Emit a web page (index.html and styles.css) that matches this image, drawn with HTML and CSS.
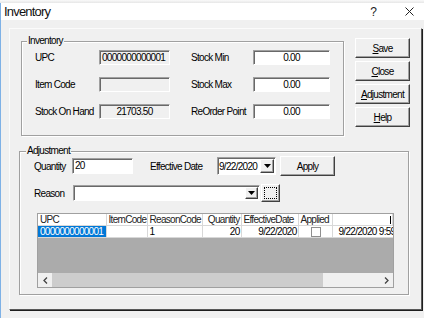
FILE: index.html
```html
<!DOCTYPE html>
<html lang="en">
<head>
  <meta charset="UTF-8">
  <meta name="viewport" content="width=device-width, initial-scale=1.0">
  <title>Inventory</title>
  <link rel="stylesheet" href="styles.css">
</head>
<body>
  <div class="screen-top"></div>
  <div class="window">
    <div class="titlebar">
      <span class="title">Inventory</span>
      <span class="tb-help">?</span>
      <span class="tb-close">
        <svg width="9" height="9" viewBox="0 0 9 9"><path d="M0.5 0.5 L8.5 8.5 M8.5 0.5 L0.5 8.5" stroke="#222" stroke-width="1" fill="none"/></svg>
      </span>
    </div>

    <div class="client">
      <div class="panel">
        <div class="top-row">
          <fieldset class="group inventory">
            <legend>Inventory</legend>
            <div class="inv-grid">
              <label>UPC</label>
              <div class="field readonly">0000000000001</div>
              <label class="col2">Stock Min</label>
              <div class="field center">0.00</div>

              <label>Item Code</label>
              <div class="field readonly"></div>
              <label class="col2">Stock Max</label>
              <div class="field center">0.00</div>

              <label>Stock On Hand</label>
              <div class="field readonly center">21703.50</div>
              <label class="col2">ReOrder Point</label>
              <div class="field center">0.00</div>
            </div>
          </fieldset>

          <div class="actions">
            <button class="btn"><u>S</u>ave</button>
            <button class="btn"><u>C</u>lose</button>
            <button class="btn"><u>A</u>djustment</button>
            <button class="btn"><u>H</u>elp</button>
          </div>
        </div>

        <fieldset class="group adjustment">
          <legend>Adjustment</legend>

          <div class="adj-row first">
            <label class="lbl-qty">Quantity</label>
            <div class="field qty">20</div>
            <label class="lbl-date">Effective Date</label>
            <div class="field combo date">
              <span class="combo-text">9/22/2020</span>
              <span class="drop-btn"><svg width="7" height="4" viewBox="0 0 7 4"><path d="M0 0 H7 L3.5 4 Z" fill="#000"/></svg></span>
            </div>
            <button class="btn apply">Apply</button>
          </div>

          <div class="adj-row second">
            <label class="lbl-reason">Reason</label>
            <div class="field combo reason">
              <span class="combo-text"></span>
              <span class="drop-btn"><svg width="7" height="4" viewBox="0 0 7 4"><path d="M0 0 H7 L3.5 4 Z" fill="#000"/></svg></span>
            </div>
            <button class="btn pick"><span class="focus-rect"></span></button>
          </div>

          <div class="datagrid">
            <table>
              <colgroup>
                <col style="width: 68px">
                <col style="width: 41px">
                <col style="width: 55px">
                <col style="width: 39px">
                <col style="width: 57px">
                <col style="width: 34px">
                <col>
              </colgroup>
              <thead>
                <tr>
                  <th>UPC</th>
                  <th>ItemCode</th>
                  <th>ReasonCode</th>
                  <th class="right">Quantity</th>
                  <th>EffectiveDate</th>
                  <th>Applied</th>
                  <th class="right"><span class="tick"></span></th>
                </tr>
              </thead>
              <tbody>
                <tr>
                  <td class="selected">0000000000001</td>
                  <td></td>
                  <td>1</td>
                  <td class="right">20</td>
                  <td class="right">9/22/2020</td>
                  <td class="center"><span class="checkbox"></span></td>
                  <td class="clip">9/22/2020 9:59</td>
                </tr>
              </tbody>
            </table>
            <div class="grid-empty"></div>
            <div class="hscroll">
              <span class="arrow">
                <svg width="5" height="7" viewBox="0 0 5 7"><path d="M4 0.5 L1 3.5 L4 6.5" stroke="#444" stroke-width="1.3" fill="none"/></svg>
              </span>
              <span class="thumb"></span>
              <span class="track"></span>
              <span class="arrow">
                <svg width="5" height="7" viewBox="0 0 5 7"><path d="M1 0.5 L4 3.5 L1 6.5" stroke="#444" stroke-width="1.3" fill="none"/></svg>
              </span>
            </div>
          </div>
        </fieldset>
      </div>
    </div>
  </div>
</body>
</html>
```

FILE: styles.css
```css
body {
  margin: 0;
  width: 424px;
  height: 318px;
  overflow: hidden;
  background: #f0f0f0;
  font-family: "Liberation Sans", Arial, sans-serif;
  font-size: 10px;
  letter-spacing: -0.7px;
  color: #000;
}

label {
  white-space: nowrap;
}

.screen-top {
  height: 3px;
  background: linear-gradient(to bottom, #fafafa, #e6e6e6);
}

.window {
  height: 315px;
  border-left: 1px solid #7eb1e6;
  background: #f0f0f0;
}

.titlebar {
  height: 17px;
  background: #fff;
  display: flex;
  align-items: center;
  padding-left: 3px;
}

.title {
  font-size: 13px;
  letter-spacing: -0.8px;
  color: #111;
}

.tb-help {
  margin-left: auto;
  font-size: 12px;
  letter-spacing: 0;
  color: #222;
}

.tb-close {
  display: flex;
  margin-left: 28px;
  margin-right: 10px;
}

.client {
  padding: 8px 0 0 8px;
}

.panel {
  width: 413px;
  height: 282px;
  box-sizing: border-box;
  border: 1px solid;
  border-color: #fbfbfb #5a5a5a #5a5a5a #fbfbfb;
  box-shadow: 1px 1px 0 #1e1e1e;
}

/* Group boxes */
.group {
  margin: 0;
  border: 1px solid #a0a0a0;
  box-shadow: inset 1px 1px 0 #fff, 1px 1px 0 #fff;
}

.group legend {
  padding: 0 1px;
  margin-left: -8px;
  line-height: 12px;
  background: #f0f0f0;
}

.top-row {
  display: flex;
  align-items: flex-start;
  padding-left: 11px;
}

.inventory {
  width: 323px;
  box-sizing: border-box;
  margin-top: 6px;
  padding: 3px 13px 16px 13px;
}

.inv-grid {
  display: grid;
  grid-template-columns: 64px 71px 83px 77px;
  grid-auto-rows: 15px;
  row-gap: 12px;
  align-items: center;
}

.inv-grid .col2 {
  padding-left: 21px;
}

/* Text boxes */
.field {
  box-sizing: border-box;
  height: 15px;
  border: 1px solid;
  border-color: #a0a0a0 #fff #fff #a0a0a0;
  box-shadow: inset 1px 1px 0 #696969;
  background: #fff;
  padding: 0 2px;
  line-height: 13px;
  white-space: nowrap;
  overflow: hidden;
}

.field.readonly {
  background: #f0f0f0;
}

.field.center {
  text-align: center;
}

/* Buttons */
.btn {
  box-sizing: border-box;
  margin: 0;
  padding: 0;
  font: inherit;
  letter-spacing: inherit;
  color: #000;
  background: #f0f0f0;
  border: 1px solid;
  border-color: #fff #404040 #404040 #fff;
  box-shadow: inset -1px -1px 0 #a0a0a0;
  display: flex;
  align-items: center;
  justify-content: center;
}

.actions {
  display: flex;
  flex-direction: column;
  gap: 3px;
  margin-left: 11px;
  margin-top: 9px;
}

.actions .btn {
  width: 55px;
  height: 20px;
}

/* Adjustment section */
.adjustment {
  width: 390px;
  box-sizing: border-box;
  margin: 9px 0 0 9px;
  padding: 0 14px 6px 14px;
}

.adj-row {
  display: flex;
  align-items: center;
}

.adj-row.first {
  height: 20px;
  margin-top: -1px;
}

.adj-row.second {
  height: 18px;
  margin-top: 8px;
}

.lbl-qty {
  width: 38px;
}

.field.qty {
  width: 61px;
  height: 16px;
  line-height: 14px;
}

.lbl-date {
  width: 67px;
  margin-left: 17px;
}

.combo {
  display: flex;
  align-items: center;
  padding: 0 1px 0 1px;
}

.combo-text {
  flex: 1;
}

.field.date {
  width: 59px;
  height: 18px;
}

.drop-btn {
  box-sizing: border-box;
  width: 13px;
  height: 13px;
  background: #f0f0f0;
  border: 1px solid;
  border-color: #fff #404040 #404040 #fff;
  box-shadow: inset -1px -1px 0 #a0a0a0;
  display: flex;
  align-items: center;
  justify-content: center;
}

.date .drop-btn {
  height: 14px;
  width: 14px;
}

.btn.apply {
  width: 55px;
  height: 20px;
  margin-left: 4px;
}

.lbl-reason {
  width: 39px;
}

.field.reason {
  width: 187px;
  height: 16px;
}

.reason .drop-btn {
  height: 12px;
}

.btn.pick {
  width: 19px;
  height: 18px;
  margin-left: 1px;
}

.focus-rect {
  width: 11px;
  height: 10px;
  border: 1px dotted #000;
}

/* Data grid */
.datagrid {
  width: 357px;
  height: 75px;
  box-sizing: border-box;
  margin: 11px 0 0 3px;
  border: 1px solid #a0a0a0;
  display: flex;
  flex-direction: column;
  background: #ababab;
}

.datagrid table {
  width: 100%;
  table-layout: fixed;
  border-collapse: collapse;
  background: #fff;
}

.datagrid th,
.datagrid td {
  height: 11px;
  padding: 0 1px 0 2px;
  line-height: 11px;
  font-weight: normal;
  text-align: left;
  white-space: nowrap;
  overflow: hidden;
  border-right: 1px solid #d8d8d8;
  border-bottom: 1px solid #d8d8d8;
}

.datagrid th {
  color: #222;
}

.datagrid .right {
  text-align: right;
}

.datagrid .center {
  text-align: center;
}

.datagrid td.selected {
  background: #0078d7;
  color: #fff;
}

.datagrid td.clip {
  text-overflow: clip;
  padding-left: 6px;
  border-right: none;
}

.tick {
  display: inline-block;
  width: 1px;
  height: 8px;
  background: #000;
  vertical-align: middle;
}

.checkbox {
  display: inline-block;
  width: 8px;
  height: 8px;
  border: 1px solid #8f8f8f;
  background: #fff;
  vertical-align: middle;
}

.grid-empty {
  flex: 1;
}

.hscroll {
  height: 14px;
  display: flex;
  background: #f0f0f0;
}

.hscroll .arrow {
  width: 14px;
  display: flex;
  align-items: center;
  justify-content: center;
}

.hscroll .thumb {
  width: 271px;
  background: #cdcdcd;
}

.hscroll .track {
  flex: 1;
}
```
